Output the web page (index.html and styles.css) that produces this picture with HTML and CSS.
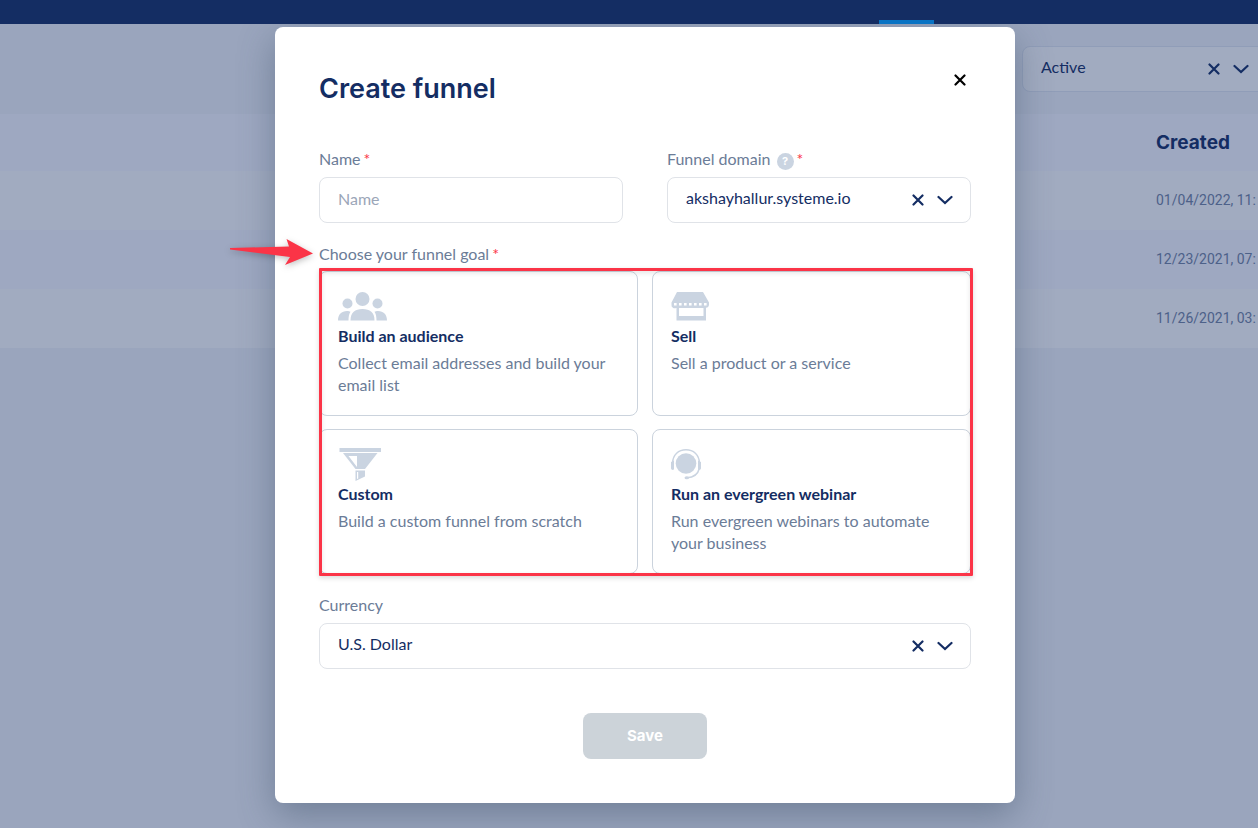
FILE: index.html
```html
<!DOCTYPE html>
<html lang="en">
<head>
<meta charset="utf-8">
<title>Create funnel</title>
<link rel="stylesheet" href="styles.css">
</head>
<body>
<div class="app">
  <header class="topbar"><span class="topbar-tab"></span></header>
  <main>
    <div class="filters">
      <div class="select select-muted">
        <select aria-label="Status"><option>Active</option></select>
        <div class="select-icons">
          <button type="button" class="icon-btn" aria-label="Clear status"><svg width="12" height="12" viewBox="0 0 12 12"><path d="M1.500 1.500l9 9M10.500 1.500l-9 9"/></svg></button>
          <svg width="16" height="10" viewBox="0 0 16 10"><path d="M1.500 2L8 8l6.500-6"/></svg>
        </div>
      </div>
    </div>
    <table class="funnels">
      <thead><tr><th></th><th class="created" scope="col">Created</th></tr></thead>
      <tbody>
        <tr><td></td><td>01/04/2022, 11:</td></tr>
        <tr><td></td><td>12/23/2021, 07:</td></tr>
        <tr><td></td><td>11/26/2021, 03:</td></tr>
      </tbody>
    </table>
  </main>

  <div class="overlay">
    <form class="modal" role="dialog" aria-labelledby="title">
      <div class="modal-head">
        <h1 id="title">Create funnel</h1>
        <button type="button" class="icon-btn close" aria-label="Close"><svg width="12" height="12" viewBox="0 0 12 12"><path d="M1.500 1.500l9 9M10.500 1.500l-9 9"/></svg></button>
      </div>

      <div class="field-row">
        <div class="field">
          <label for="name">Name<span class="req">*</span></label>
          <input id="name" class="text" type="text" placeholder="Name">
        </div>
        <div class="field">
          <label for="domain">Funnel domain <span class="help">?</span><span class="req">*</span></label>
          <div class="select">
            <select id="domain"><option>akshayhallur.systeme.io</option></select>
            <div class="select-icons">
              <button type="button" class="icon-btn" aria-label="Clear domain"><svg width="12" height="12" viewBox="0 0 12 12"><path d="M1.500 1.500l9 9M10.500 1.500l-9 9"/></svg></button>
              <svg width="16" height="10" viewBox="0 0 16 10"><path d="M1.500 2L8 8l6.500-6"/></svg>
            </div>
          </div>
        </div>
      </div>

      <div class="field goal-field">
        <div class="label" id="goal">Choose your funnel goal<span class="req">*</span></div>
        <svg class="arrow" width="84" height="28" viewBox="0 0 84 28"><path d="M0 9L59 7.500 56.500 0 83 14.500 55 26 60 18 0 10.500z"/></svg>
        <div class="goals" role="group" aria-labelledby="goal">
          <button type="button" class="goal">
            <svg width="50" height="34" viewBox="0 0 50 34">
              <circle cx="24.500" cy="9" r="7"/><circle cx="9.500" cy="13.500" r="5"/><circle cx="39.500" cy="13.500" r="5"/>
              <path d="M12.500 30.500C12.500 22.500 17 19 24.500 19s12 3.500 12 11.500z"/>
              <path d="M0 30.500c0-6 3.500-9.500 9-9.500 1.500 0 2.500.2 3.500.7-1.500 2.300-2 5-2 8.800zM49 30.500c0-6-3.500-9.500-9-9.500-1.500 0-2.500.2-3.500.7 1.500 2.300 2 5 2 8.800z"/>
            </svg>
            <strong>Build an audience</strong>
            <span>Collect email addresses and build your email list</span>
          </button>
          <button type="button" class="goal">
            <svg width="50" height="34" viewBox="0 0 50 34">
              <path d="M6 2h26l6 10.500v2a3.200 3.200 0 0 1-3 3.200v12.800H5.500V17.700a3.200 3.200 0 0 1-5-3.200v-2zM8 17v9h24.500v-9z"/>
              <path d="M3 14h33.500l-2.500 4H5z"/>
              <path class="cut" d="M3 13h2.600v2.600H3zM8 13h2.600v2.600H8zM13 13h2.600v2.600H13zM18 13h2.600v2.600H18zM23 13h2.600v2.600H23zM28 13h2.600v2.600H28zM33 13h2.600v2.600H33z"/>
            </svg>
            <strong>Sell</strong>
            <span>Sell a product or a service</span>
          </button>
          <button type="button" class="goal">
            <svg width="50" height="34" viewBox="0 0 50 34">
              <path d="M1.500 0h41.500v4h-41.500zM5 5h34.500L27 21h-9.500zM17.500 22.500h9.500v6l-9.500 4.500z"/>
              <path class="cut" d="M10.500 8H19v11zM19 24h1.200v6.500l-1.200.6z"/>
            </svg>
            <strong>Custom</strong>
            <span>Build a custom funnel from scratch</span>
          </button>
          <button type="button" class="goal">
            <svg width="50" height="34" viewBox="0 0 50 34">
              <circle cx="15" cy="15.500" r="10.300"/>
              <path class="line" d="M1.500 15C2 6.500 7.500 1.800 15 1.800S28 6.500 28.500 15M28.500 20c-1.500 6-6 9.500-12.500 9.700"/>
              <path d="M0 14l3-1.500v9L1 22l-1-1.500zM30 14l-3-1.500v9l2 .5 1-1.500z"/><ellipse cx="15.800" cy="29.800" rx="2.300" ry="1.500"/>
            </svg>
            <strong>Run an evergreen webinar</strong>
            <span>Run evergreen webinars to automate your business</span>
          </button>
          <div class="highlight"></div>
        </div>
      </div>

      <div class="field">
        <label for="currency">Currency</label>
        <div class="select">
          <select id="currency"><option>U.S. Dollar</option></select>
          <div class="select-icons">
            <button type="button" class="icon-btn" aria-label="Clear currency"><svg width="12" height="12" viewBox="0 0 12 12"><path d="M1.500 1.500l9 9M10.500 1.500l-9 9"/></svg></button>
            <svg width="16" height="10" viewBox="0 0 16 10"><path d="M1.500 2L8 8l6.500-6"/></svg>
          </div>
        </div>
      </div>

      <button type="submit" class="save" disabled>Save</button>
    </form>
  </div>
</div>
</body>
</html>
```
FILE: styles.css
```css
* { box-sizing: border-box; }
html { height: 100%; }
body {
  margin: 0;
  min-height: 100%;
  overflow: hidden;
  background: #9aa5bd;
  color: #142d63;
  font: 16px/24px Lato, sans-serif;
}
button, input, select { font: inherit; color: inherit; }

/* The page behind the dialog runs past the right edge of the window. */
.app { position: relative; width: calc(100% + 32px); }

.topbar {
  position: relative;
  z-index: 2;
  display: flex;
  justify-content: flex-end;
  align-items: flex-end;
  height: 24px;
  padding-right: 356px;
  background: #142d63;
}
.topbar-tab { width: 55px; height: 4px; background: #0873c4; }

.filters {
  display: flex;
  justify-content: flex-end;
  padding: 22px 23px;
}
.filters .select { width: 245px; }

.funnels {
  width: 100%;
  table-layout: fixed;
  border-collapse: collapse;
  white-space: nowrap;
  text-align: left;
}
.funnels th, .funnels td { padding: 0; }
.funnels th {
  height: 57px;
  background: #9ea8c1;
  font: 700 19px/24px Inter, sans-serif;
}
.funnels td {
  height: 59px;
  padding-bottom: 1px;
  background: #9ea8c1;
  color: #4d6189;
  font: 14px/24px Roboto, sans-serif;
}
.funnels tr:nth-child(odd) td { background: #a1abc0; }
.funnels .created { width: 134px; }

.select { position: relative; }
.select select {
  display: block;
  width: 100%;
  height: 46px;
  padding: 0 80px 4px 18px;
  border: 1px solid #e0e3e8;
  border-radius: 8px;
  background: #fff;
  appearance: none;
}
.select-muted select { border-color: #909db8; background: #a1abc0; }
.select-icons {
  position: absolute;
  top: 0;
  right: 18px;
  bottom: 0;
  display: flex;
  align-items: center;
  gap: 13px;
}
.select-icons svg, .close svg {
  display: block;
  fill: none;
  stroke: currentColor;
  stroke-width: 2.2;
  stroke-linecap: round;
}
.icon-btn { padding: 0; border: 0; background: none; }

.overlay {
  position: absolute;
  top: 27px;
  left: 0;
  right: 0;
  display: flex;
  justify-content: center;
}
.modal {
  width: 740px;
  padding: 44px;
  border-radius: 8px;
  background: #fff;
  box-shadow: 0 12px 36px rgba(60, 80, 105, 0.45);
}
.modal-head {
  display: flex;
  justify-content: space-between;
  align-items: flex-start;
  margin-bottom: 41px;
}
h1 { margin: 0; font: 600 27px/36px Inter, sans-serif; }
.close { padding: 3px 5px; color: #000; }

.field-row {
  display: grid;
  grid-template-columns: 1fr 1fr;
  gap: 44px;
  margin-bottom: 20px;
}
.field label, .label {
  display: block;
  margin-bottom: 7px;
  color: #6b7c97;
  line-height: 22px;
}
.req { margin-left: 3px; color: #fb3447; }
.help {
  display: inline-block;
  width: 17px;
  height: 17px;
  margin-left: 2px;
  border-radius: 50%;
  background: #cad4e1;
  color: #fff;
  font: 700 11px/17px Inter, sans-serif;
  text-align: center;
}
.text {
  display: block;
  width: 100%;
  height: 46px;
  padding: 0 18px 4px;
  border: 1px solid #e0e3e8;
  border-radius: 8px;
  background: #fff;
}
.text::placeholder { color: #9ba6b8; opacity: 1; }

.goal-field { position: relative; margin-bottom: 20px; }
.goal-field .label { margin-bottom: 6px; }
.goals {
  position: relative;
  display: grid;
  grid-template-columns: 1fr 1fr;
  gap: 13px 14px;
}
.goal {
  display: flex;
  flex-direction: column;
  align-items: flex-start;
  min-height: 145px;
  padding: 18px;
  border: 1px solid #cbd3dd;
  border-radius: 8px;
  background: #fff;
  color: #6b7c97;
  line-height: 22px;
  text-align: left;
}
.goal svg { fill: #cad4e1; }
.goal svg .cut { fill: #fff; }
.goal svg .line { fill: none; stroke: #cad4e1; stroke-width: 1.5; }
.goal strong { margin-bottom: 4px; color: #142d63; line-height: 24px; }

.highlight {
  position: absolute;
  inset: -3px -2px -2px 0;
  border: 3px solid #fb3447;
  border-radius: 1px;
  box-shadow: 0 2px 5px rgba(0, 0, 0, 0.15), inset 0 2px 5px rgba(0, 0, 0, 0.1);
  pointer-events: none;
}
.arrow {
  position: absolute;
  top: -4px;
  left: -89px;
  overflow: visible;
  fill: #fb3447;
  filter: drop-shadow(0 2px 3px rgba(0, 0, 0, 0.25));
}

.save {
  display: block;
  width: 124px;
  height: 46px;
  margin: 44px auto 0;
  border: 0;
  border-radius: 8px;
  background: #ccd3d9;
  color: #fff;
  font: 700 15px/24px Inter, sans-serif;
}
```
